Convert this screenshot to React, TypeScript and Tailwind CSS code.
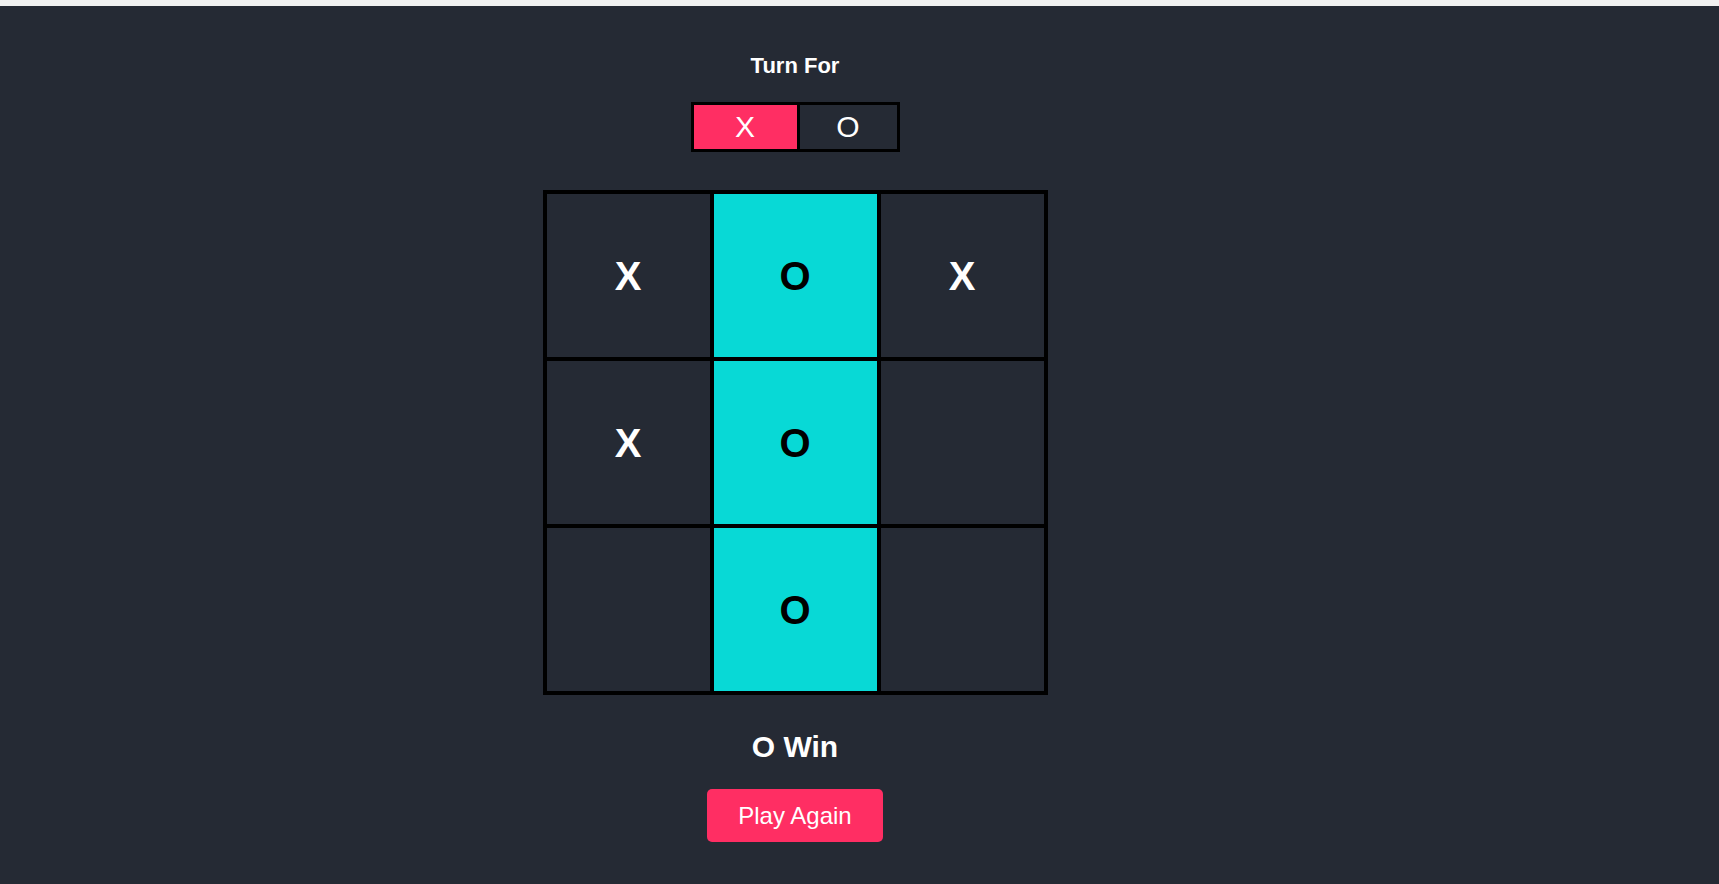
import { useState } from 'react';

type Mark = 'X' | 'O' | '';

const initialBoard: Mark[] = ['X', 'O', 'X', 'X', 'O', '', '', 'O', ''];
const winLine = [1, 4, 7];

export default function App() {
  const [board] = useState<Mark[]>(initialBoard);
  const [turn] = useState<'X' | 'O'>('X');

  return (
    <div className="min-h-screen w-full flex flex-col bg-[#252a34] font-['Liberation_Sans',Arial,sans-serif] text-white">
      {/* top strip */}
      <div className="h-[6px] w-full bg-[#f1f1f1]" />

      <div className="w-[1590px] flex flex-col items-center pt-[47px]">
        <h2 className="text-[22px] leading-[26px] font-bold">Turn For</h2>

        {/* turn toggle */}
        <div className="mt-[23px] flex border-[3px] border-black">
          <div
            className={`w-[103px] h-[44px] flex items-center justify-center text-[30px] leading-none ${
              turn === 'X' ? 'bg-[#ff2e63]' : ''
            }`}
          >
            X
          </div>
          <div
            className={`w-[100px] h-[44px] flex items-center justify-center text-[30px] leading-none border-l-[3px] border-black ${
              turn === 'O' ? 'bg-[#ff2e63]' : ''
            }`}
          >
            O
          </div>
        </div>

        {/* board */}
        <div className="mt-[38px] grid grid-cols-3 border-2 border-black">
          {board.map((cell, i) => {
            const won = winLine.includes(i);
            return (
              <div
                key={i}
                className={`w-[167px] h-[167px] border-2 border-black flex items-center justify-center text-[40px] leading-none font-bold ${
                  won ? 'bg-[#08d9d6] text-black' : 'bg-[#252a34] text-white'
                }`}
              >
                {cell}
              </div>
            );
          })}
        </div>

        <div className="mt-[35px] text-[30px] leading-[34px] font-bold">O Win</div>

        <button className="mt-[25px] h-[53px] w-[176px] rounded-[5px] bg-[#ff2e63] text-[24px] leading-none text-white flex items-center justify-center">
          Play Again
        </button>
      </div>
    </div>
  );
}
